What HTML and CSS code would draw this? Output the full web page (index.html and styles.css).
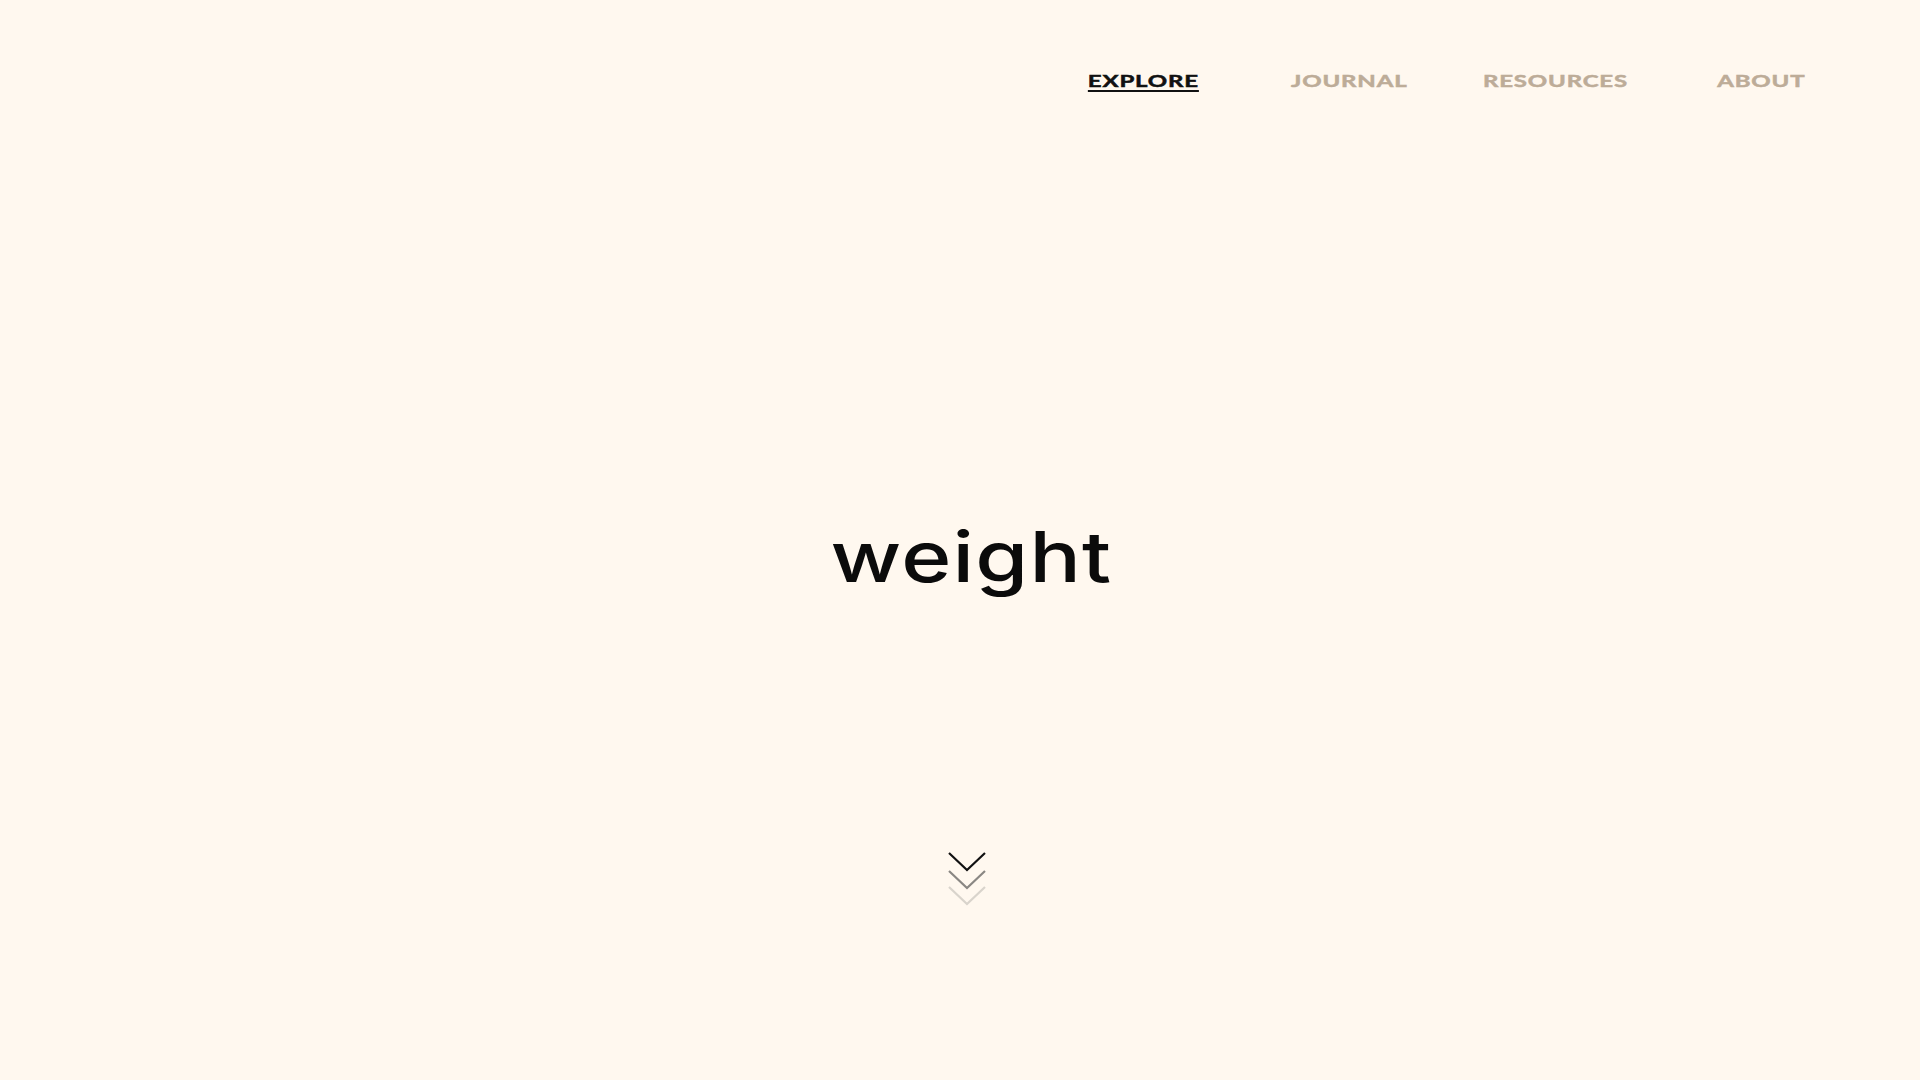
FILE: index.html
```html
<!DOCTYPE html>
<html lang="en">
<head>
<meta charset="utf-8">
<title>weight</title>
<link rel="stylesheet" href="styles.css">
</head>
<body>
<div class="page">
  <header class="header">
    <nav class="nav">
      <a class="nav-item active" href="#"><span>EXPLORE</span></a>
      <a class="nav-item" href="#"><span>JOURNAL</span></a>
      <a class="nav-item" href="#"><span>RESOURCES</span></a>
      <a class="nav-item" href="#"><span>ABOUT</span></a>
    </nav>
  </header>
  <main class="hero">
    <h1 class="word">weight</h1>
    <div class="scroll">
      <svg width="40" height="56" viewBox="0 0 40 56" aria-hidden="true">
        <polyline points="2,1 20,18 38,1" fill="none" stroke="#111" stroke-width="2.2"/>
        <polyline points="2,19 20,36 38,19" fill="none" stroke="#8a8783" stroke-width="2.2"/>
        <polyline points="2,35 20,52 38,35" fill="none" stroke="#d9d4cc" stroke-width="2.2"/>
      </svg>
    </div>
  </main>
</div>
</body>
</html>
```
FILE: styles.css
```css
html, body {
  margin: 0;
  padding: 0;
  background: #fff8ef;
}
.page {
  width: 1920px;
  height: 1080px;
  display: flex;
  flex-direction: column;
  overflow: hidden;
}
.header {
  display: flex;
  justify-content: flex-end;
  padding: 70px 56px 0 0;
}
.nav {
  display: flex;
}
.nav-item {
  width: 206px;
  text-align: center;
  font-family: "Lato", "Liberation Sans", sans-serif;
  font-weight: 700;
  font-size: 17px;
  line-height: 22px;
  letter-spacing: 0.6px;
  color: #bdac98;
  text-decoration: none;
  -webkit-text-stroke: 0.5px currentColor;
}
.nav-item span {
  display: inline-block;
  transform: scaleX(1.41);
  transform-origin: center;
}
.nav-item.active {
  color: #111;
}
.nav-item.active span {
  text-decoration: underline;
  text-decoration-thickness: 2px;
  text-underline-offset: 3px;
}
.hero {
  display: flex;
  flex-direction: column;
  align-items: center;
}
.word {
  margin: 425px 0 0 22px;
  font-family: "Inter", "Noto Sans", sans-serif;
  font-weight: 500;
  font-size: 70px;
  line-height: 80px;
  color: #0b0b0b;
  letter-spacing: 1px;
  transform: scaleX(1.22);
}
.scroll {
  margin: 255px 0 0 14px;
  line-height: 0;
}
```
